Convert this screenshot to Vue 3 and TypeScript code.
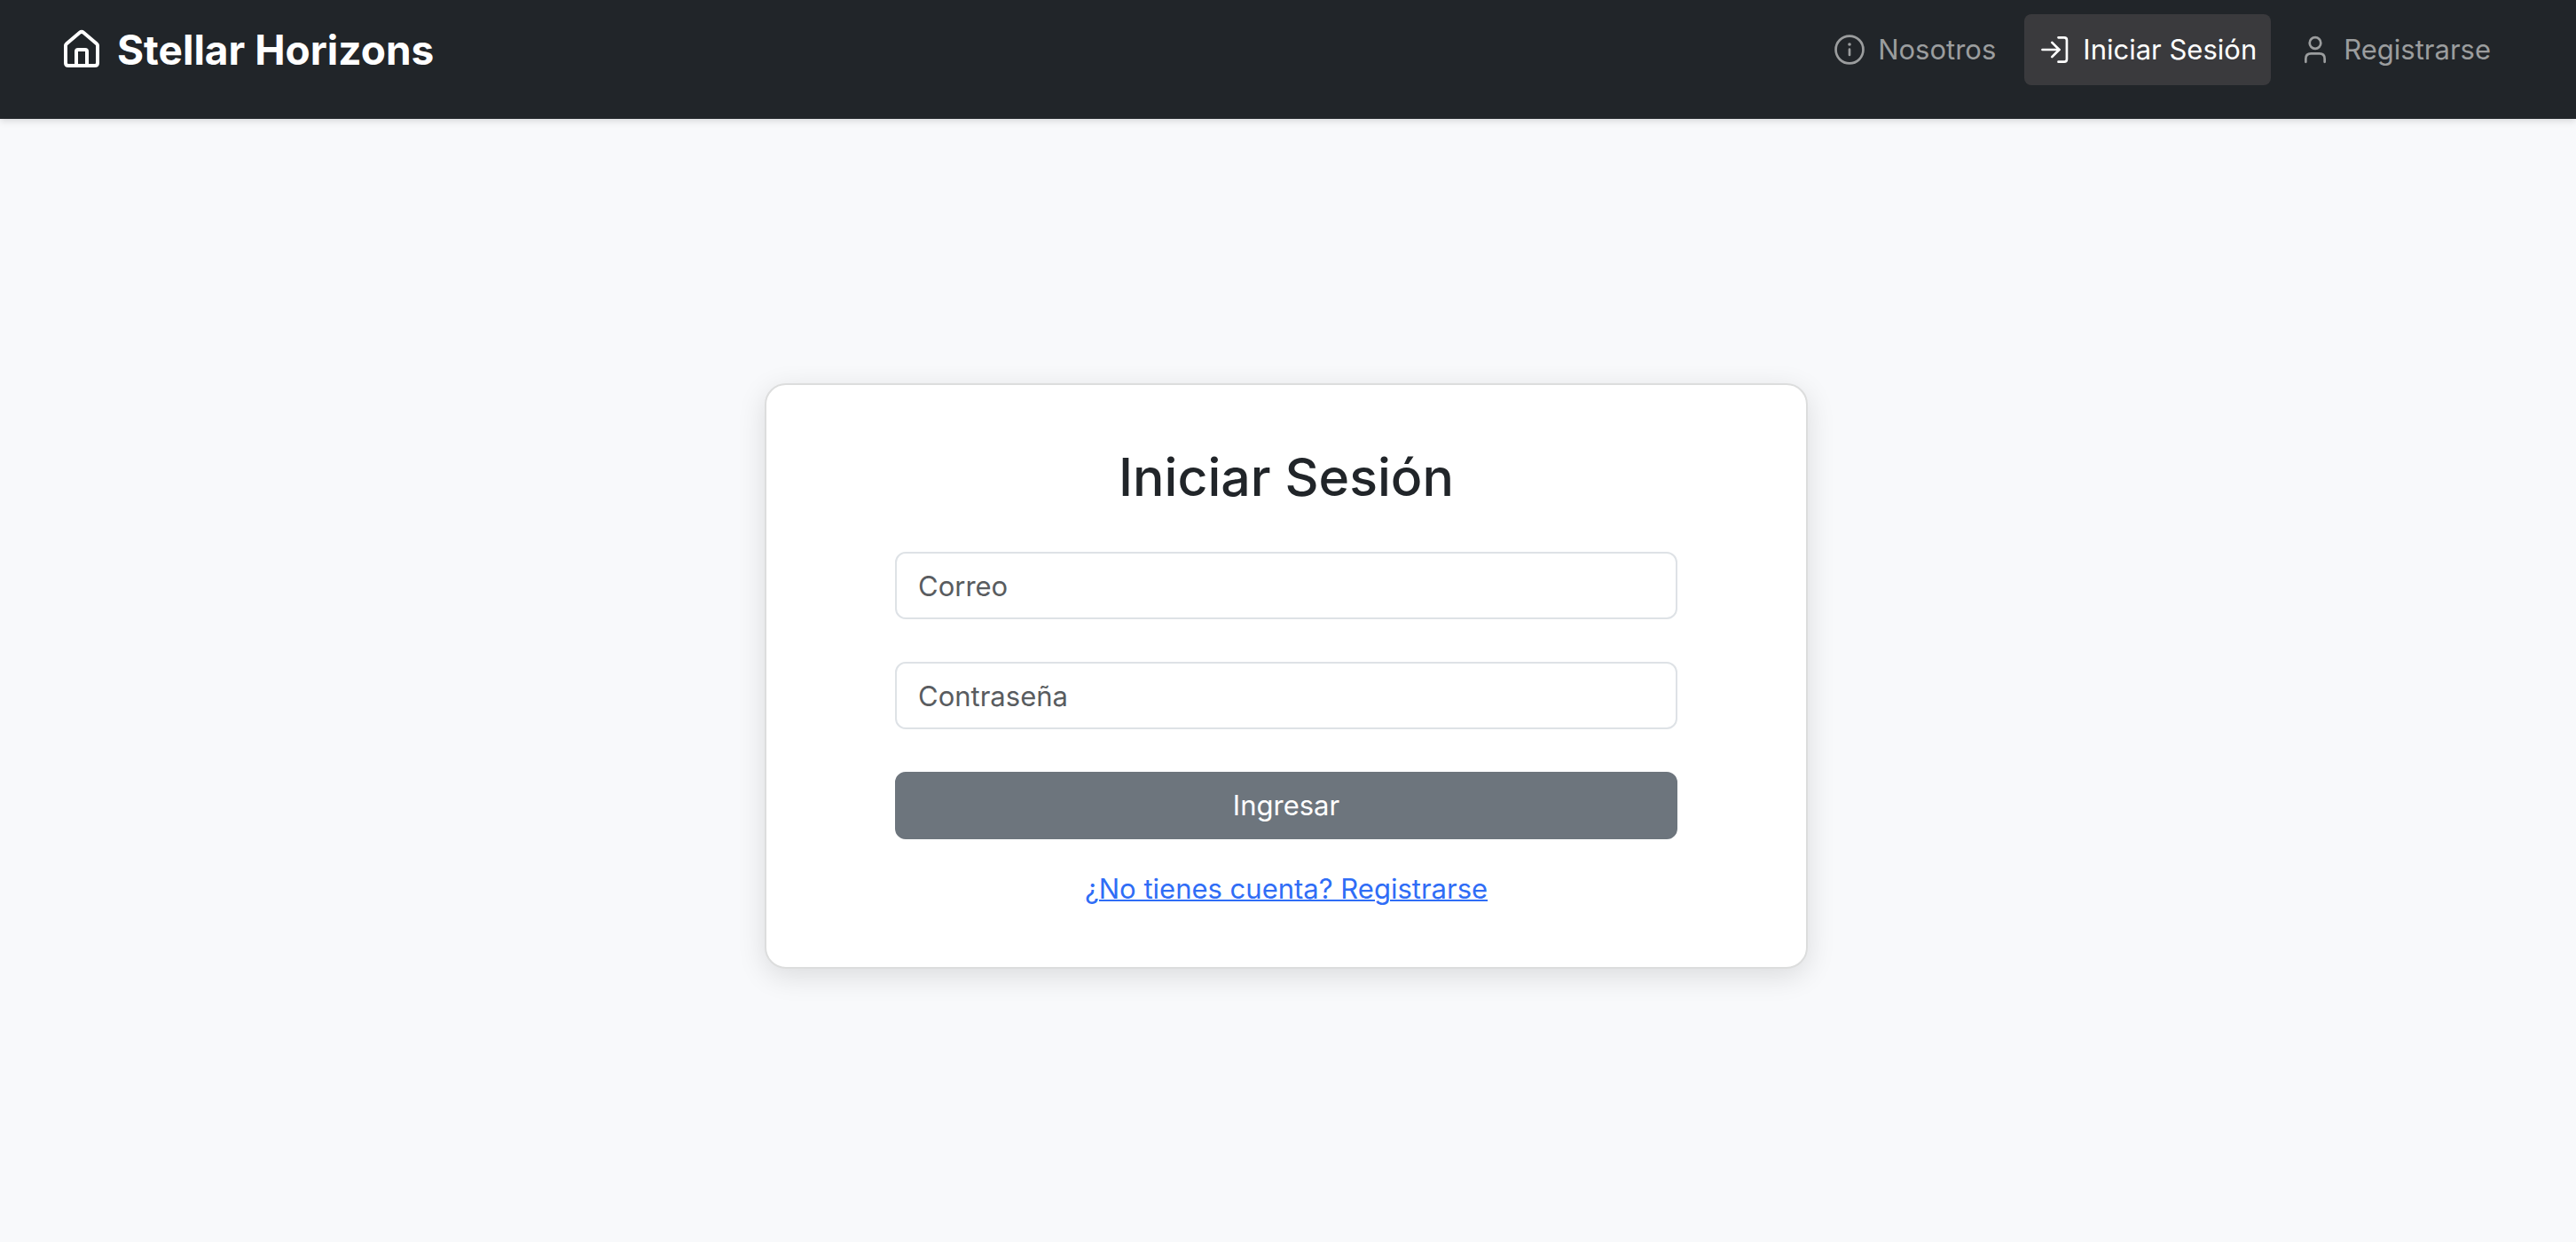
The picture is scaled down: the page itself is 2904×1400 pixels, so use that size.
<script setup lang="ts">
import { ref } from 'vue'

const correo = ref('')
const password = ref('')
</script>

<template>
  <div class="app">
    <header class="topbar">
      <a class="brand" href="#">
        <svg class="brand-icon" viewBox="0 0 24 24" aria-hidden="true">
          <path d="M3 9.6 Q3 9.1 3.4 8.8 L10.9 2.4 Q12 1.5 13.1 2.4 L20.6 8.8 Q21 9.1 21 9.6 V19.5 Q21 21 19.5 21 H4.5 Q3 21 3 19.5 Z" />
          <path d="M9 21 V13 Q9 12 10 12 H14 Q15 12 15 13 V21" />
        </svg>
        <span>Stellar Horizons</span>
      </a>
      <nav class="links">
        <a class="link" href="#nosotros">
          <svg class="icon" viewBox="0 0 24 24" aria-hidden="true">
            <circle cx="12" cy="12" r="10.3" />
            <path d="M12 11.8 V16" />
            <circle class="dot" cx="12" cy="8" r="1.2" />
          </svg>
          <span>Nosotros</span>
        </a>
        <a class="link active" href="#login" aria-current="page">
          <svg class="icon" viewBox="0 0 24 24" aria-hidden="true">
            <path d="M3 12 H15.6" />
            <path d="M10.2 6.6 L15.6 12 L10.2 17.4" />
            <path d="M15 2.9 H19.4 Q21.3 2.9 21.3 4.8 V19.2 Q21.3 21.1 19.4 21.1 H15" />
          </svg>
          <span>Iniciar Sesión</span>
        </a>
        <a class="link" href="#registro">
          <svg class="icon" viewBox="0 0 24 24" aria-hidden="true">
            <circle cx="12" cy="7" r="4.2" />
            <path d="M4.9 21.2 V18.8 Q4.9 14.9 8.8 14.9 H15.2 Q19.1 14.9 19.1 18.8 V21.2" />
          </svg>
          <span>Registrarse</span>
        </a>
      </nav>
    </header>

    <main class="content">
      <section class="card">
        <h1>Iniciar Sesión</h1>
        <form class="form" @submit.prevent>
          <input v-model="correo" type="email" placeholder="Correo" aria-label="Correo" />
          <input v-model="password" type="password" placeholder="Contraseña" aria-label="Contraseña" />
          <button type="submit">Ingresar</button>
        </form>
        <a class="signup" href="#registro">¿No tienes cuenta? Registrarse</a>
      </section>
    </main>
  </div>
</template>

<style>
body {
  margin: 0;
  background: #f8f9fb;
}
</style>

<style scoped>
.app {
  display: flex;
  flex-direction: column;
  min-height: 100vh;
  font-family: Inter, 'Liberation Sans', sans-serif;
  font-size: 31px;
  line-height: 48px;
  color: #212529;
}

.topbar {
  display: flex;
  align-items: center;
  justify-content: space-between;
  padding: 16px 80px 38px 68px;
  background: #212529;
  box-shadow: 0 2px 8px rgba(0, 0, 0, 0.15);
}

.brand {
  display: flex;
  align-items: center;
  gap: 16px;
  color: #fff;
  font-size: 46px;
  font-weight: 700;
  text-decoration: none;
}

.brand-icon {
  width: 48px;
  height: 48px;
  fill: none;
  stroke: currentColor;
  stroke-width: 2;
  stroke-linecap: round;
  stroke-linejoin: round;
}

.links {
  display: flex;
  gap: 16px;
}

.link {
  display: flex;
  align-items: center;
  gap: 14px;
  padding: 16px;
  border-radius: 8px;
  color: #9b9d9e;
  text-decoration: none;
}

.link.active {
  color: #fff;
  background: #3a3a3d;
}

.icon {
  width: 36px;
  height: 36px;
  fill: none;
  stroke: currentColor;
  stroke-width: 1.8;
  stroke-linecap: round;
  stroke-linejoin: round;
}

.icon .dot {
  fill: currentColor;
  stroke: none;
}

.content {
  display: flex;
  flex: 1;
  align-items: center;
  justify-content: center;
  padding: 0 4px 10px 0;
}

.card {
  display: flex;
  flex-direction: column;
  align-items: center;
  box-sizing: border-box;
  width: 100%;
  max-width: 1176px;
  padding: 64px 24px;
  border: 2px solid #dcdddd;
  border-radius: 24px;
  background: #fff;
  box-shadow: 0 8px 32px rgba(0, 0, 0, 0.12);
}

h1 {
  margin: 0 0 44px;
  font-size: 59px;
  font-weight: 500;
  line-height: 80px;
}

.form {
  display: flex;
  flex-direction: column;
  gap: 48px;
  width: 100%;
  max-width: 882px;
  margin-bottom: 32px;
}

input,
button {
  box-sizing: border-box;
  width: 100%;
  height: 76px;
  padding: 0 24px;
  border: 2px solid #dee2e6;
  border-radius: 12px;
  font: inherit;
}

input {
  background: #fff;
  color: #212529;
}

input::placeholder {
  color: #595c5f;
  opacity: 1;
}

button {
  border-color: #6d757d;
  background: #6d757d;
  color: #fff;
}

.signup {
  color: #2f6df6;
  text-decoration-thickness: 2px;
}
</style>
